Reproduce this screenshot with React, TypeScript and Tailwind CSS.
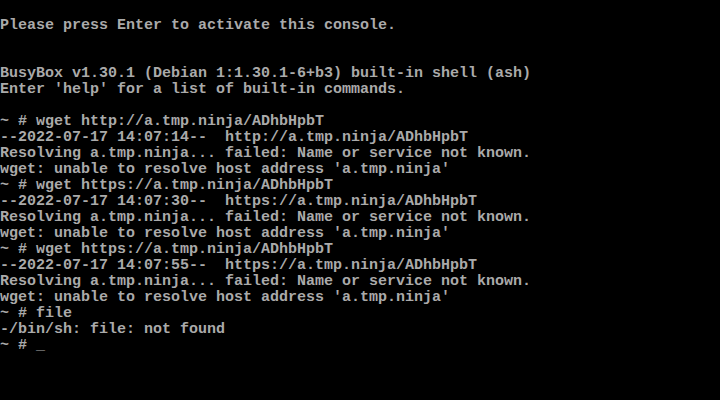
import React from "react";

const lines: string[] = [
  "",
  "Please press Enter to activate this console.",
  "",
  "",
  "BusyBox v1.30.1 (Debian 1:1.30.1-6+b3) built-in shell (ash)",
  "Enter 'help' for a list of built-in commands.",
  "",
  "~ # wget http://a.tmp.ninja/ADhbHpbT",
  "--2022-07-17 14:07:14--  http://a.tmp.ninja/ADhbHpbT",
  "Resolving a.tmp.ninja... failed: Name or service not known.",
  "wget: unable to resolve host address 'a.tmp.ninja'",
  "~ # wget https://a.tmp.ninja/ADhbHpbT",
  "--2022-07-17 14:07:30--  https://a.tmp.ninja/ADhbHpbT",
  "Resolving a.tmp.ninja... failed: Name or service not known.",
  "wget: unable to resolve host address 'a.tmp.ninja'",
  "~ # wget https://a.tmp.ninja/ADhbHpbT",
  "--2022-07-17 14:07:55--  https://a.tmp.ninja/ADhbHpbT",
  "Resolving a.tmp.ninja... failed: Name or service not known.",
  "wget: unable to resolve host address 'a.tmp.ninja'",
  "~ # file",
  "-/bin/sh: file: not found",
  "~ # _",
];

const App: React.FC = () => {
  return (
    <div className="w-[720px] h-[400px] bg-black overflow-hidden pt-[2px]">
      <div className="font-['Liberation_Mono',monospace] text-[15px] leading-[16px] font-bold text-[#aaaaaa] whitespace-pre">
        {lines.map((line, index) => (
          <div key={index} className="h-[16px]">
            {line}
          </div>
        ))}
      </div>
    </div>
  );
};

export default App;
